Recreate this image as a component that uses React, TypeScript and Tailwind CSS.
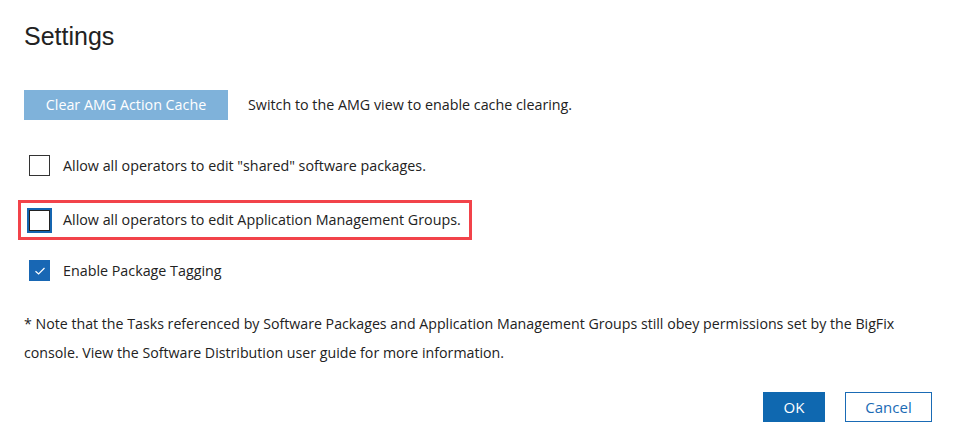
import React from "react";

function Check({ checked = false, focused = false }: { checked?: boolean; focused?: boolean }) {
  if (checked) {
    return (
      <div className="w-[21px] h-[21px] bg-[#1867b4] flex items-center justify-center shrink-0">
        <svg width="12" height="10" viewBox="0 0 12 10" fill="none">
          <path d="M1.5 5.2 L4.6 8 L10.5 2" stroke="white" strokeWidth="1.2" />
        </svg>
      </div>
    );
  }
  if (focused) {
    return (
      <div className="w-[25px] h-[25px] border-2 border-[#1565b0] shrink-0">
        <div className="w-full h-full border border-[#222]" />
      </div>
    );
  }
  return <div className="w-[21px] h-[21px] border border-[#333] shrink-0" />;
}

export default function App() {
  return (
    <div
      className="w-[959px] h-[441px] bg-white text-[#222] relative"
      style={{ fontFamily: '"Open Sans", "Noto Sans", sans-serif' }}
    >
      <div className="pt-[21px] pl-[24px] pr-[24px]">
        <h1
          className="text-[25px] leading-[30px] text-[#222]"
          style={{ fontFamily: '"Liberation Sans", Arial, sans-serif' }}
        >
          Settings
        </h1>

        <div className="flex items-center mt-[39px]">
          <div className="w-[204px] h-[30px] bg-[#7fb2da] text-white text-[14.3px] flex items-center justify-center">
            Clear AMG Action Cache
          </div>
          <div className="ml-[20px] text-[14.3px]">Switch to the AMG view to enable cache clearing.</div>
        </div>

        <div className="flex items-center mt-[35px] pl-[5px] h-[21px]">
          <Check />
          <div className="ml-[13px] text-[14.3px]">Allow all operators to edit "shared" software packages.</div>
        </div>

        <div className="mt-[24px] -ml-[6px] w-[454px] h-[40px] border-[3px] border-[#f2434a] flex items-center pl-[6px]">
          <Check focused />
          <div className="ml-[11px] text-[14.3px]">Allow all operators to edit Application Management Groups.</div>
        </div>

        <div className="flex items-center mt-[20px] pl-[5px] h-[21px]">
          <Check checked />
          <div className="ml-[13px] text-[14.3px]">Enable Package Tagging</div>
        </div>

        <div className="mt-[28px] text-[14.2px] leading-[29px]">
          * Note that the Tasks referenced by Software Packages and Application Management Groups still obey permissions set by the BigFix
          <br />
          console. View the Software Distribution user guide for more information.
        </div>

        <div className="flex justify-end mt-[25px] pr-[3px] gap-[20px]">
          <div className="w-[62px] h-[30px] bg-[#0f68b0] text-white text-[15px] flex items-center justify-center">OK</div>
          <div className="w-[87px] h-[30px] border border-[#1a6bb5] text-[#1a6bb5] text-[15px] flex items-center justify-center">
            Cancel
          </div>
        </div>
      </div>
    </div>
  );
}
